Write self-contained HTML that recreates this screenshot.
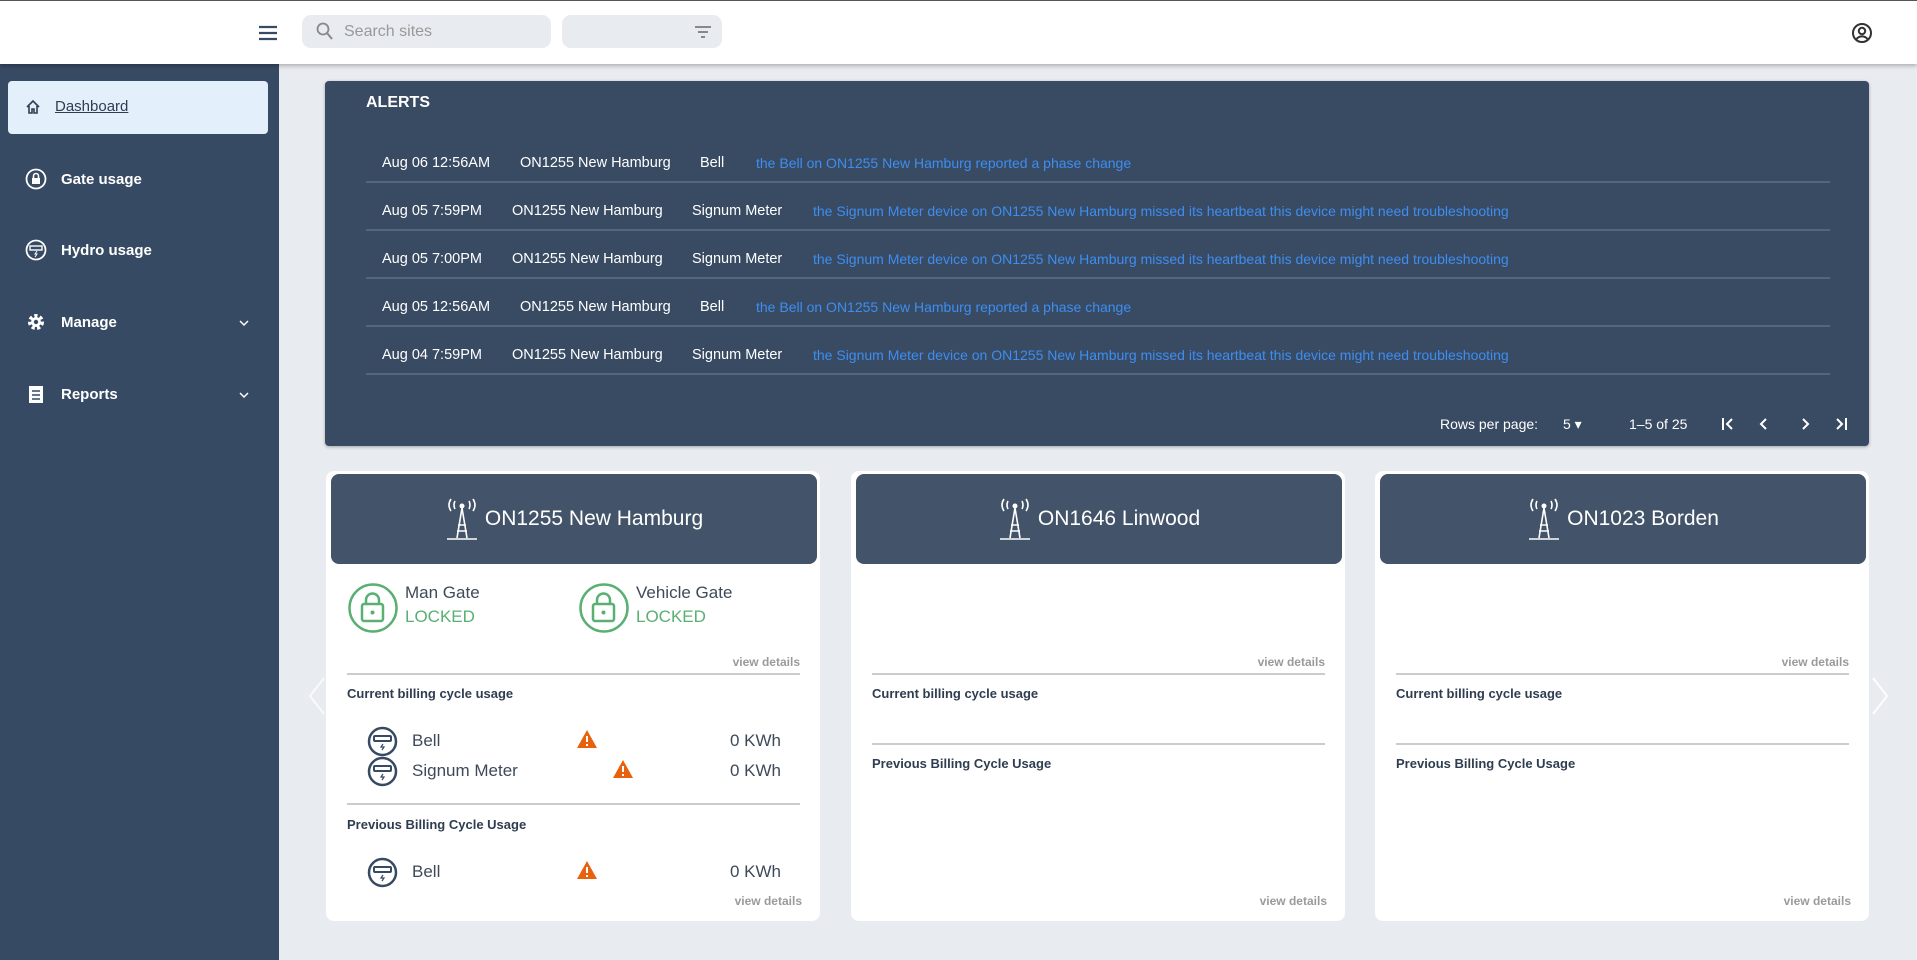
<!DOCTYPE html>
<html><head><meta charset="utf-8"><style>
*{margin:0;padding:0;box-sizing:border-box}
body{width:1917px;height:960px;background:#e8ebf0;font-family:"Liberation Sans",Arial,sans-serif;position:relative;overflow:hidden}
.a{position:absolute}
.top{left:0;top:0;width:1917px;height:64px;background:#fff;border-top:1px solid #555;box-shadow:0 2px 4px rgba(0,0,0,.25);z-index:2}
.side{left:0;top:64px;width:279px;height:896px;background:#374a63}
.mi{position:absolute;left:25px;color:#fff;font-weight:bold;font-size:15px;display:flex;align-items:center;gap:14px}
.alerts{left:325px;top:81px;width:1544px;height:365px;background:#394a63;border-radius:4px;color:#fff;box-shadow:0 1px 3px rgba(0,0,0,.3)}
.row{position:absolute;left:41px;width:1464px;height:48px;border-bottom:2px solid #55657b;font-size:14.5px}
.row span{position:absolute;top:20px;white-space:nowrap}
.msg{color:#3d8ef0;font-size:14px}
.card{background:#fff;border-radius:8px;width:494px;height:450px;top:471px}
.hdr{position:absolute;left:5px;top:3px;width:486px;height:90px;background:#435369;border-radius:8px;color:#fff;font-size:21px;display:flex;align-items:center;justify-content:center;gap:6px}
.vd{position:absolute;right:20px;font-size:12px;font-weight:bold;color:#9a9a9a}
.dv{position:absolute;left:21px;right:20px;height:2px;background:#ccc}
.lbl{position:absolute;left:21px;font-size:13px;font-weight:bold;color:#2f3d50}
.nm{position:absolute;font-size:17px;color:#3e4a5a}
</style></head><body>
<div class="a top">
 <svg class="a" style="left:258px;top:24px" width="20" height="16" viewBox="0 0 20 16"><path d="M1 2h18M1 8h18M1 14h18" stroke="#374a63" stroke-width="2.2"/></svg>
 <div class="a" style="left:302px;top:14px;width:249px;height:33px;background:#e8ebf0;border-radius:9px"></div>
 <svg class="a" style="left:316px;top:21px" width="18" height="20" viewBox="0 0 18 20"><circle cx="7" cy="7" r="5.5" fill="none" stroke="#888" stroke-width="1.8"/><path d="M11 11l5 6" stroke="#888" stroke-width="2"/></svg>
 <div class="a" style="left:344px;top:22px;font-size:16px;color:#999">Search sites</div>
 <div class="a" style="left:562px;top:14px;width:160px;height:33px;background:#e8ebf0;border-radius:9px"></div>
 <svg class="a" style="left:694px;top:24px" width="18" height="14"><path d="M1 2h16M4 7h10M7 12h4" stroke="#888" stroke-width="2"/></svg>
 <svg class="a" style="left:1851px;top:21px" width="22" height="22" viewBox="0 0 22 22"><circle cx="11" cy="11" r="9" fill="none" stroke="#333" stroke-width="2"/><circle cx="11" cy="9" r="3.2" fill="none" stroke="#333" stroke-width="2"/><path d="M5.5 17c3-3.5 8-3.5 11 0" fill="none" stroke="#333" stroke-width="2"/></svg>
</div>
<div class="a side">
 <div class="a" style="left:8px;top:17px;width:260px;height:53px;background:#e3f0fb;border-radius:4px"></div>
 <div class="mi" style="top:34px;color:#2f3d50;font-weight:normal"><svg width="16" height="16" viewBox="0 0 16 16"><path d="M2 8L8 2l6 6M4 7v7h3v-4h2v4h3V7" fill="none" stroke="#2f3d50" stroke-width="1.6"/></svg><span style="text-decoration:underline">Dashboard</span></div>
 <div class="mi" style="top:104px"><svg width="22" height="22" viewBox="0 0 22 22"><circle cx="11" cy="11" r="9.5" fill="none" stroke="#fff" stroke-width="1.8"/><rect x="7" y="10" width="8" height="6" fill="#fff"/><path d="M8.5 10V8a2.5 2.5 0 0 1 5 0v2" fill="none" stroke="#fff" stroke-width="1.6"/></svg>Gate usage</div>
 <div class="mi" style="top:175px"><svg width="22" height="22" viewBox="0 0 22 22"><circle cx="11" cy="11" r="9.5" fill="none" stroke="#fff" stroke-width="1.8"/><rect x="5" y="7" width="12" height="4" fill="none" stroke="#fff" stroke-width="1.4"/><path d="M12 12l-2 3h2l-2 3" fill="none" stroke="#fff" stroke-width="1"/></svg>Hydro usage</div>
 <div class="mi" style="top:247px"><svg width="22" height="22" viewBox="0 0 22 22"><circle cx="11" cy="11" r="6" fill="none" stroke="#fff" stroke-width="4" stroke-dasharray="3 2.3"/><circle cx="11" cy="11" r="5" fill="#fff"/><circle cx="11" cy="11" r="2.2" fill="#374a63"/></svg>Manage</div>
 <div class="mi" style="top:319px"><svg width="22" height="22" viewBox="0 0 22 22"><rect x="4" y="3" width="14" height="17" fill="#fff"/><path d="M7 8h8M7 12h8M7 16h8" stroke="#374a63" stroke-width="1.6"/></svg>Reports</div>
 <svg class="a" style="left:239px;top:255px" width="10" height="8"><path d="M1 2l4 4 4-4" fill="none" stroke="#fff" stroke-width="1.5"/></svg>
 <svg class="a" style="left:239px;top:327px" width="10" height="8"><path d="M1 2l4 4 4-4" fill="none" stroke="#fff" stroke-width="1.5"/></svg>
</div>
<div class="a alerts">
 <div class="a" style="left:41px;top:13px;font-weight:bold;font-size:16px">ALERTS</div>
 <div class="row" style="top:54px"><span style="left:16px">Aug 06 12:56AM</span><span style="left:154px">ON1255 New Hamburg</span><span style="left:334px">Bell</span><span class="msg" style="left:390px">the Bell on ON1255 New Hamburg reported a phase change</span></div>
 <div class="row" style="top:102px"><span style="left:16px">Aug 05 7:59PM</span><span style="left:146px">ON1255 New Hamburg</span><span style="left:326px">Signum Meter</span><span class="msg" style="left:447px">the Signum Meter device on ON1255 New Hamburg missed its heartbeat this device might need troubleshooting</span></div>
 <div class="row" style="top:150px"><span style="left:16px">Aug 05 7:00PM</span><span style="left:146px">ON1255 New Hamburg</span><span style="left:326px">Signum Meter</span><span class="msg" style="left:447px">the Signum Meter device on ON1255 New Hamburg missed its heartbeat this device might need troubleshooting</span></div>
 <div class="row" style="top:198px"><span style="left:16px">Aug 05 12:56AM</span><span style="left:154px">ON1255 New Hamburg</span><span style="left:334px">Bell</span><span class="msg" style="left:390px">the Bell on ON1255 New Hamburg reported a phase change</span></div>
 <div class="row" style="top:246px"><span style="left:16px">Aug 04 7:59PM</span><span style="left:146px">ON1255 New Hamburg</span><span style="left:326px">Signum Meter</span><span class="msg" style="left:447px">the Signum Meter device on ON1255 New Hamburg missed its heartbeat this device might need troubleshooting</span></div>
 <div class="a" style="left:1115px;top:335px;font-size:14px">Rows per page:</div>
 <div class="a" style="left:1238px;top:335px;font-size:14px">5 ▾</div>
 <div class="a" style="left:1304px;top:335px;font-size:14px">1–5 of 25</div>
 <svg class="a" style="left:1395px;top:335px" width="130" height="16" viewBox="0 0 130 16"><g fill="none" stroke="#fff" stroke-width="2"><path d="M3 2v12M12 3l-5 5 5 5"/><path d="M46 3l-5 5 5 5"/><path d="M83 3l5 5-5 5"/><path d="M117 3l5 5-5 5M126 2v12"/></g></svg>
</div>
<svg class="a" style="left:306px;top:676px" width="20" height="40"><path d="M18 2L4 20l14 18" fill="none" stroke="#fff" stroke-width="2" opacity=".7"/></svg>
<svg class="a" style="left:1871px;top:676px" width="20" height="40"><path d="M2 2l14 18L2 38" fill="none" stroke="#fff" stroke-width="2" opacity=".9"/></svg>

<!-- card 1 -->
<div class="a card" style="left:326px">
 <div class="hdr"><svg width="34" height="44" viewBox="0 0 34 44"><g fill="none" stroke="#fff" stroke-width="1.6"><path d="M6 2q-4 6 0 12M10 4q-2 4 0 8M28 2q4 6 0 12M24 4q2 4 0 8"/><path d="M17 11L12 41M17 11l5 30M13 28h8M12 34h10M2 42h30"/></g><circle cx="17" cy="9" r="2.5" fill="#fff"/></svg><span>ON1255 New Hamburg</span></div>
 <svg class="a" style="left:21px;top:111px" width="52" height="52" viewBox="0 0 52 52"><circle cx="26" cy="26" r="23.5" fill="none" stroke="#5aaf72" stroke-width="2.5"/><rect x="15" y="22" width="21" height="17" rx="2" fill="none" stroke="#5aaf72" stroke-width="2.5"/><path d="M19 22v-4a6.5 6.5 0 0 1 13 0v4" fill="none" stroke="#5aaf72" stroke-width="2.5"/><circle cx="25.5" cy="30.5" r="2" fill="#5aaf72"/></svg>
 <div class="nm" style="left:79px;top:112px">Man Gate</div><div class="nm" style="left:79px;top:136px;color:#5aaf72">LOCKED</div>
 <svg class="a" style="left:252px;top:111px" width="52" height="52" viewBox="0 0 52 52"><circle cx="26" cy="26" r="23.5" fill="none" stroke="#5aaf72" stroke-width="2.5"/><rect x="15" y="22" width="21" height="17" rx="2" fill="none" stroke="#5aaf72" stroke-width="2.5"/><path d="M19 22v-4a6.5 6.5 0 0 1 13 0v4" fill="none" stroke="#5aaf72" stroke-width="2.5"/><circle cx="25.5" cy="30.5" r="2" fill="#5aaf72"/></svg>
 <div class="nm" style="left:310px;top:112px">Vehicle Gate</div><div class="nm" style="left:310px;top:136px;color:#5aaf72">LOCKED</div>
 <div class="vd" style="top:184px">view details</div>
 <div class="dv" style="top:202px"></div>
 <div class="lbl" style="top:215px">Current billing cycle usage</div>
 <svg class="a" style="left:41px;top:255px" width="31" height="31" viewBox="0 0 31 31"><circle cx="15.5" cy="15.5" r="13.5" fill="none" stroke="#374a63" stroke-width="2.5"/><rect x="7" y="10" width="17" height="5" rx="1" fill="none" stroke="#374a63" stroke-width="2"/><path d="M16 18l-2 3h3l-2 3" fill="none" stroke="#374a63" stroke-width="1.2"/></svg>
 <div class="nm" style="left:86px;top:260px">Bell</div>
 <svg class="a" style="left:250px;top:258px" width="22" height="20"><path d="M11 1L21 19H1z" fill="#e8620d"/><path d="M11 7v6M11 15v2" stroke="#fff" stroke-width="2"/></svg>
 <div class="nm" style="left:404px;top:260px">0 KWh</div>
 <svg class="a" style="left:41px;top:285px" width="31" height="31" viewBox="0 0 31 31"><circle cx="15.5" cy="15.5" r="13.5" fill="none" stroke="#374a63" stroke-width="2.5"/><rect x="7" y="10" width="17" height="5" rx="1" fill="none" stroke="#374a63" stroke-width="2"/><path d="M16 18l-2 3h3l-2 3" fill="none" stroke="#374a63" stroke-width="1.2"/></svg>
 <div class="nm" style="left:86px;top:290px">Signum Meter</div>
 <svg class="a" style="left:286px;top:288px" width="22" height="20"><path d="M11 1L21 19H1z" fill="#e8620d"/><path d="M11 7v6M11 15v2" stroke="#fff" stroke-width="2"/></svg>
 <div class="nm" style="left:404px;top:290px">0 KWh</div>
 <div class="dv" style="top:332px"></div>
 <div class="lbl" style="top:346px">Previous Billing Cycle Usage</div>
 <svg class="a" style="left:41px;top:386px" width="31" height="31" viewBox="0 0 31 31"><circle cx="15.5" cy="15.5" r="13.5" fill="none" stroke="#374a63" stroke-width="2.5"/><rect x="7" y="10" width="17" height="5" rx="1" fill="none" stroke="#374a63" stroke-width="2"/><path d="M16 18l-2 3h3l-2 3" fill="none" stroke="#374a63" stroke-width="1.2"/></svg>
 <div class="nm" style="left:86px;top:391px">Bell</div>
 <svg class="a" style="left:250px;top:389px" width="22" height="20"><path d="M11 1L21 19H1z" fill="#e8620d"/><path d="M11 7v6M11 15v2" stroke="#fff" stroke-width="2"/></svg>
 <div class="nm" style="left:404px;top:391px">0 KWh</div>
 <div class="vd" style="top:423px;right:18px">view details</div>
</div>
<!-- card 2 -->
<div class="a card" style="left:851px">
 <div class="hdr"><svg width="34" height="44" viewBox="0 0 34 44"><g fill="none" stroke="#fff" stroke-width="1.6"><path d="M6 2q-4 6 0 12M10 4q-2 4 0 8M28 2q4 6 0 12M24 4q2 4 0 8"/><path d="M17 11L12 41M17 11l5 30M13 28h8M12 34h10M2 42h30"/></g><circle cx="17" cy="9" r="2.5" fill="#fff"/></svg><span>ON1646 Linwood</span></div>
 <div class="vd" style="top:184px">view details</div>
 <div class="dv" style="top:202px"></div>
 <div class="lbl" style="top:215px">Current billing cycle usage</div>
 <div class="dv" style="top:272px"></div>
 <div class="lbl" style="top:285px">Previous Billing Cycle Usage</div>
 <div class="vd" style="top:423px;right:18px">view details</div>
</div>
<!-- card 3 -->
<div class="a card" style="left:1375px">
 <div class="hdr"><svg width="34" height="44" viewBox="0 0 34 44"><g fill="none" stroke="#fff" stroke-width="1.6"><path d="M6 2q-4 6 0 12M10 4q-2 4 0 8M28 2q4 6 0 12M24 4q2 4 0 8"/><path d="M17 11L12 41M17 11l5 30M13 28h8M12 34h10M2 42h30"/></g><circle cx="17" cy="9" r="2.5" fill="#fff"/></svg><span>ON1023 Borden</span></div>
 <div class="vd" style="top:184px">view details</div>
 <div class="dv" style="top:202px"></div>
 <div class="lbl" style="top:215px">Current billing cycle usage</div>
 <div class="dv" style="top:272px"></div>
 <div class="lbl" style="top:285px">Previous Billing Cycle Usage</div>
 <div class="vd" style="top:423px;right:18px">view details</div>
</div>
</body></html>
